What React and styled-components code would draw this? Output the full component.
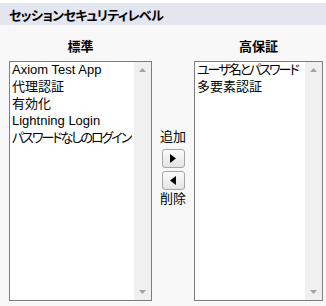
import React from 'react'
import styled, { createGlobalStyle } from 'styled-components'

const GlobalStyle = createGlobalStyle`
    body{
        margin: 0;
        background: #fff;
        font-family: "Liberation Sans", "Noto Sans CJK JP", sans-serif;
        color: #000;
    }
`

const standard = ['Axiom Test App', '代理認証', '有効化', 'Lightning Login', 'パスワードなしのログイン']
const high = ['ユーザ名とパスワード', '多要素認証']

// kana runs are drawn narrow in the original UI font
const hasKana = (text) => /[\u3040-\u30ff]/.test(text)

function ListBox({ items, width }) {
    return (
        <Box $width={width}>
            <Items>
                {items.map((item) => <Item key={item} $kana={hasKana(item)}>{item}</Item>)}
            </Items>
            <ScrollBar>
                <Arrow viewBox="0 0 7 4"><polygon points="0,4 3.5,0 7,4" /></Arrow>
                <Arrow viewBox="0 0 7 4"><polygon points="0,0 7,0 3.5,4" /></Arrow>
            </ScrollBar>
        </Box>
    )
}

function App() {
    return (
        <>
            <GlobalStyle />
            <Page>
                <Header>セッションセキュリティレベル</Header>
                <Content>
                    <ColTitle>標準</ColTitle>
                    <span />
                    <ColTitle>高保証</ColTitle>
                    <ListBox items={standard} width={143} />
                    <Mover>
                        <Label>追加</Label>
                        <MoveButton $first>
                            <svg width="6" height="9" viewBox="0 0 6 9"><polygon points="0,0 6,4.5 0,9" /></svg>
                        </MoveButton>
                        <MoveButton>
                            <svg width="6" height="9" viewBox="0 0 6 9"><polygon points="6,0 0,4.5 6,9" /></svg>
                        </MoveButton>
                        <Label>削除</Label>
                    </Mover>
                    <ListBox items={high} width={129} />
                </Content>
            </Page>
        </>
    )
}

const Page = styled.div`
    width: 326px;
    height: 306px;
    padding-top: 3px;
    box-sizing: border-box;
    display: flex;
    flex-direction: column;
`

const Header = styled.div`
    height: 22px;
    background: #e3e6ee;
    font-family: "Noto Sans CJK JP", sans-serif;
    font-feature-settings: "palt" 1;
    font-size: 13px;
    font-weight: bold;
    line-height: 23px;
    padding-left: 9px;
    letter-spacing: -0.7px;
`

const Content = styled.div`
    flex: 1;
    background: #f8f8f8;
    display: grid;
    grid-template-columns: 143px 42px 129px;
    grid-template-rows: 16px 240px;
    row-gap: 6px;
    padding: 14px 0 0 9px;
`

const ColTitle = styled.div`
    text-align: center;
    font-size: 13px;
    font-weight: bold;
    line-height: 16px;
`

const Box = styled.div`
    width: ${props => props.$width}px;
    height: 240px;
    box-sizing: border-box;
    border: 1px solid #7d7d7d;
    background: #fff;
    display: flex;
`

const Items = styled.div`
    flex: 1;
    min-width: 0;
    padding: 0 0 0 2px;
    margin-top: -1px;
    overflow: hidden;
`

const Item = styled.div`
    font-feature-settings: "palt" 1;
    font-size: 13px;
    line-height: 17px;
    white-space: nowrap;
    letter-spacing: ${props => props.$kana ? '-2px' : '0'};
`

const ScrollBar = styled.div`
    width: 17px;
    flex-shrink: 0;
    background: #f0f0f0;
    display: flex;
    flex-direction: column;
    justify-content: space-between;
    align-items: center;
    padding: 6px 0 6px;
`

const Arrow = styled.svg`
    width: 7px;
    height: 4px;
    fill: #a3a3a3;
`

const Mover = styled.div`
    display: flex;
    flex-direction: column;
    align-items: center;
    padding-top: 67px;
`

const Label = styled.div`
    font-size: 13px;
    line-height: 16px;
    margin-top: 1px;
`

const MoveButton = styled.button`
    width: 23px;
    height: 19px;
    margin-top: ${props => props.$first ? '4px' : '3px'};
    padding: 0;
    border: 1px solid #a5a5a5;
    border-radius: 3px;
    background: linear-gradient(#fbfbfb, #e4e4e4);
    display: flex;
    align-items: center;
    justify-content: center;
    svg{
        fill: #000;
    }
`

export default App
